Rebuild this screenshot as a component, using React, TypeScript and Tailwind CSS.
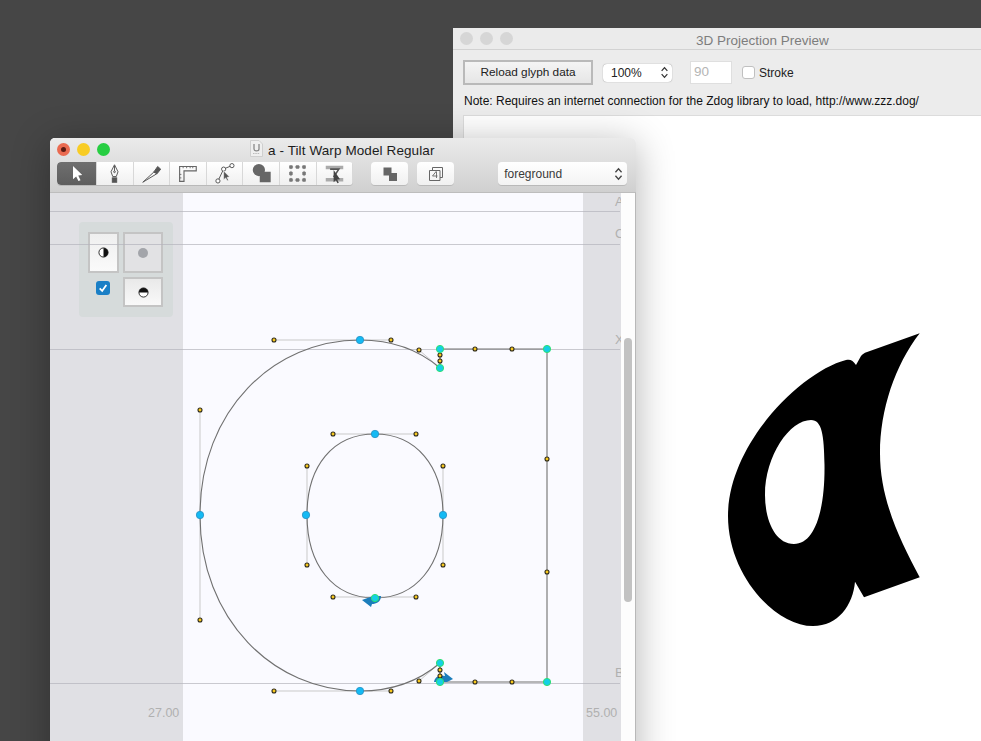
import React from 'react'

const font = { fontFamily: '"Liberation Sans", Arial, sans-serif' }

const Light = ({ color, dot }: { color: string; dot?: boolean }) => (
  <span className="flex h-[13px] w-[13px] items-center justify-center rounded-full" style={{ background: color }}>
    {dot && <span className="h-[5px] w-[5px] rounded-full bg-[#5a1a12]" />}
  </span>
)

const UpDown = ({ className }: { className?: string }) => (
  <svg viewBox="0 0 10 16" className={className} fill="none" stroke="currentColor" strokeWidth="1.5">
    <path d="M1.5 6 5 2l3.5 4M1.5 10 5 14l3.5-4" />
  </svg>
)

// toolbar icons, all drawn on a 24x24 box
const tools: React.ReactNode[] = [
  <path key="arrow" d="M8 3.500v15l3.600-3.200 2.600 5.400 2.400-1.100-2.600-5.300 4.600-.5z" fill="#fff" />,
  <g key="pen" fill="none" stroke="#555" strokeWidth="1.100">
    <path d="M12 2 8 10l2 5.500h4l2-5.500z" />
    <path d="M12 3v6" />
    <circle cx="12" cy="10" r="1" />
    <rect x="9.500" y="17" width="5" height="5" fill="#555" />
  </g>,
  <g key="knife" stroke="#555" strokeWidth="1.100">
    <path d="M2 22 14.500 10.500l4 1.500z" fill="none" />
    <path d="M14.500 10.500 19 4l3.500 3-4 5z" fill="#555" />
  </g>,
  <g key="ruler" fill="none" stroke="#666" strokeWidth="1.300">
    <path d="M3 4h19v5H8v12H3z" />
    <path d="M7 4v2M11 4v2M15 4v2M18 4v2M3 13h2M3 17h2" strokeWidth="1" />
  </g>,
  <g key="nodes" fill="none" stroke="#555" strokeWidth="1.100">
    <circle cx="4.500" cy="20.500" r="2.400" fill="#fff" />
    <circle cx="11" cy="7" r="2.400" fill="#fff" />
    <circle cx="20.500" cy="3" r="2.400" fill="#fff" />
    <path d="M5.500 18.500 10 9M13 6l5.500-2.200" />
    <path d="M11 9v10l2.400-2 1.600 3.400 1.500-.7-1.600-3.300 3-.4z" fill="#555" stroke="#fff" strokeWidth=".6" />
  </g>,
  <g key="shapes" fill="#666">
    <circle cx="9" cy="8" r="7" />
    <rect x="10" y="10" width="12.500" height="12" />
  </g>,
  <g key="transform" fill="#777">
    <path d="M5 4.500h14M5 19.500h14M4.500 5v14M19.500 5v14" stroke="#888" strokeDasharray="2 2" />
    {[[4.5, 4.5], [12, 4.5], [19.5, 4.5], [4.5, 12], [19.5, 12], [4.5, 19.5], [12, 19.5], [19.5, 19.5]].map(([x, y]) => (
      <rect key={`${x}-${y}`} x={x - 2} y={y - 2} width="4" height="4" rx=".8" />
    ))}
  </g>,
  <g key="metrics">
    <path d="M2 3h20v4H2zM2 17h20v4H2z" fill="#aaa" />
    <path d="M7 7h10l-6 9" fill="none" stroke="#555" strokeWidth="1.800" />
    <path d="M11 8v14l2.600-2.400 1.800 3.600 1.500-.7-1.800-3.600 3.200-.4z" fill="#444" />
  </g>
]

const ToolButton = ({ children, active, first }: { children: React.ReactNode; active?: boolean; first?: boolean }) => (
  <div
    className={`flex h-[23px] items-center justify-center border-r border-[#d8d8d8] ${
      active ? 'rounded-l-[4px] bg-gradient-to-b from-[#6f6f6f] to-[#5e5e5e]' : 'bg-gradient-to-b from-white to-[#f0f0f0]'
    } ${first ? 'w-[40px]' : 'w-[36.6px]'}`}
  >
    <svg viewBox="0 0 24 24" className="h-[21px] w-[21px]">
      {children}
    </svg>
  </div>
)

const Dot = ({ x, y }: { x: number; y: number }) => (
  <circle cx={x} cy={y} r="2" fill="#f8c81c" stroke="#2e2a1a" strokeWidth="1.100" />
)

const SmoothNode = ({ x, y }: { x: number; y: number }) => (
  <circle cx={x} cy={y} r="3.700" fill="#14baf4" stroke="#2a8fc0" strokeWidth=".8" />
)

const CornerNode = ({ x, y }: { x: number; y: number }) => (
  <circle cx={x} cy={y} r="3.600" fill="#14cfe6" stroke="#2fe070" strokeWidth="1" />
)

const handles = [
  [274, 340, 360, 340], [360, 340, 391, 340], [419, 350, 440, 368], [440, 349, 440, 368],
  [274, 691, 360, 691], [360, 691, 391, 691], [419, 681, 440, 663], [440, 663, 440, 682],
  [200, 410, 200, 620], [333, 434, 416, 434], [333, 597, 416, 597], [307, 466, 307, 565], [443, 466, 443, 565]
]

const dots = [
  [274, 340], [391, 340], [419, 350], [440, 361], [440, 355], [475, 349], [512, 349],
  [547, 459], [547, 572], [512, 682], [475, 682], [440, 670], [440, 676], [419, 681], [391, 691], [274, 691],
  [200, 620], [200, 410], [333, 434], [416, 434], [443, 466], [443, 565], [416, 597], [333, 597], [307, 565], [307, 466]
]

const Outline = () => (
  <svg viewBox="50 193 571 585" className="absolute inset-0 h-full w-full">
    {[211, 244, 349, 683].map((y) => (
      <line key={y} x1="50" y1={y + 0.5} x2="620" y2={y + 0.5} stroke="#b4b4bc" strokeOpacity=".7" />
    ))}
    {handles.map(([a, b, c, d]) => (
      <line key={`${a}-${b}-${c}-${d}`} x1={a} y1={b} x2={c} y2={d} stroke="#c9c9c9" />
    ))}
    <path
      d="M360 340C391 340 419 350 440 368V349H547V682H440V663C419 681 391 691 360 691C274 691 200 620 200 515C200 410 274 340 360 340Z"
      fill="none"
      stroke="#707070"
      strokeWidth="1.100"
    />
    <path d="M375 434C416 434 443 466 443 515C443 565 416 598 375 598C333 598 307 565 307 515C307 466 333 434 375 434Z" fill="none" stroke="#707070" strokeWidth="1.100" />
    <path d="M362 600 373 596H381C381 602 376 604 372 604L371 607Z" fill="#1b7dbb" />
    <path d="M434 682C435 677 438 675 445 676L444 672 453 679 447 682Z" fill="#1b7dbb" />
    {dots.map(([x, y]) => (
      <Dot key={`${x}-${y}`} x={x} y={y} />
    ))}
    <SmoothNode x={360} y={340} />
    <SmoothNode x={200} y={515} />
    <SmoothNode x={360} y={691} />
    <SmoothNode x={375} y={434} />
    <SmoothNode x={443} y={515} />
    <SmoothNode x={306} y={515} />
    <CornerNode x={375} y={598} />
    <CornerNode x={440} y={349} />
    <CornerNode x={440} y={368} />
    <CornerNode x={547} y={349} />
    <CornerNode x={547} y={682} />
    <CornerNode x={440} y={682} />
    <CornerNode x={440} y={663} />
  </svg>
)

const MasterButton = ({ className, children }: { className: string; children: React.ReactNode }) => (
  <div className={`flex items-center justify-center border-2 border-[#c4c4c4] ${className}`}>{children}</div>
)

const PreviewWindow = () => (
  <div className="absolute left-[453px] top-[28px] flex h-[760px] w-[600px] flex-col rounded-t-[5px] bg-[#ececec]">
    <div className="relative flex h-[22px] items-center border-b border-[#d2d2d2] bg-[#ebebeb]">
      <div className="ml-[7px] flex gap-[7px]">
        <Light color="#d6d6d6" />
        <Light color="#d6d6d6" />
        <Light color="#d6d6d6" />
      </div>
      <span className="absolute left-[243px] top-[3px] text-[13.5px] text-[#7d7d7d]">3D Projection Preview</span>
    </div>
    <div className="flex h-[44px] items-center pl-[10px] pt-[1px] text-[#222]">
      <div className="flex h-[25px] w-[130px] items-center justify-center border-2 border-[#b9b9b9] bg-gradient-to-b from-[#f4f4f4] to-[#e6e6e6] text-[11.8px]">
        Reload glyph data
      </div>
      <div className="ml-[10px] flex h-[18px] w-[69px] items-center justify-between rounded-[4px] bg-white pl-[8px] pr-[3px] text-[12px] shadow-[0_0_1px_rgba(0,0,0,0.5)]">
        100%
        <UpDown className="h-[13px] w-[9px] text-[#333]" />
      </div>
      <div className="ml-[18px] flex h-[23px] w-[42px] items-center border border-[#dfdfdf] bg-white pl-[3px] text-[13.5px] text-[#b5b5b5]">90</div>
      <div className="ml-[10px] h-[13px] w-[13px] rounded-[3px] border border-[#c0c0c0] bg-white" />
      <span className="ml-[4px] text-[12px]">Stroke</span>
    </div>
    <div className="h-[21px] pl-[11px] text-[12px] leading-[15px] text-[#111]">
      Note: Requires an internet connection for the Zdog library to load, http://www.zzz.dog/
    </div>
    <div className="ml-[10px] flex-1 border-t border-l border-[#dcdcdc] bg-white" />
  </div>
)

const GlyphWindow = () => (
  <div className="absolute left-[50px] top-[138px] flex h-[640px] w-[586px] flex-col rounded-t-[5px] bg-[#fafaff] shadow-[0_6px_38px_rgba(0,0,0,0.3)]">
    <div className="rounded-t-[5px] bg-gradient-to-b from-[#ebebeb] to-[#cfcfcf]">
      <div className="relative flex h-[22px] items-center pl-[7px]">
        <div className="flex gap-[7px]">
          <Light color="#ea6a50" dot />
          <Light color="#f8cc24" />
          <Light color="#27ce42" />
        </div>
        <svg viewBox="0 0 13 17" className="absolute left-[200px] top-[2px] h-[17px] w-[13px]">
          <path d="M.5.5h8.500l3.500 3.500v12.500H.5z" fill="#efefef" stroke="#cfcfcf" />
          <path d="M4 4v5c0 2.500 5 2.500 5 0V4" fill="none" stroke="#888" strokeWidth="1.300" />
          <path d="M3 13.500h7" stroke="#bbb" strokeDasharray="1.500 .8" />
        </svg>
        <span className="absolute left-[218px] top-[3px] text-[13.5px] tracking-[0.1px] text-[#1c1c1c]">a - Tilt Warp Model Regular</span>
      </div>
      <div className="flex h-[32px] items-start pl-[7px] pt-[2px]">
        <div className="flex overflow-hidden rounded-[4px] shadow-[0_1px_0_rgba(0,0,0,0.12)]">
          {tools.map((icon, i) => (
            <ToolButton key={i} active={i === 0} first={i === 0}>
              {icon}
            </ToolButton>
          ))}
        </div>
        <div className="ml-[18px] flex h-[23px] w-[37px] items-center justify-center rounded-[4px] bg-gradient-to-b from-white to-[#f0f0f0] shadow-[0_1px_0_rgba(0,0,0,0.12)]">
          <svg viewBox="0 0 14 14" className="h-[14px] w-[14px]" fill="#666">
            <rect x="0.500" y="0.500" width="8" height="8" />
            <rect x="6" y="6" width="8" height="8" />
          </svg>
        </div>
        <div className="ml-[9px] flex h-[23px] w-[37px] items-center justify-center rounded-[4px] bg-gradient-to-b from-white to-[#f0f0f0] shadow-[0_1px_0_rgba(0,0,0,0.12)]">
          <svg viewBox="0 0 14 14" className="h-[14px] w-[14px]" fill="none" stroke="#666">
            <path d="M.5 3.500h10.500v10H.5z" />
            <path d="M3.500 3V.5h10v10H11" />
            <path d="M7.500 4 3.500 9h5M7.500 5v6" strokeWidth=".9" />
          </svg>
        </div>
        <div className="ml-[44px] flex h-[23px] w-[129px] items-center justify-between rounded-[4px] bg-gradient-to-b from-white to-[#f3f3f3] pl-[6px] pr-[4px] text-[12px] text-[#3a3a3a] shadow-[0_1px_0_rgba(0,0,0,0.12)]">
          foreground
          <UpDown className="h-[14px] w-[9px] text-[#444]" />
        </div>
      </div>
      <div className="h-px bg-[#bdbdbd]" />
    </div>

    <div className="relative flex flex-1 overflow-hidden">
      <div className="w-[133px] bg-[#e0e0e4]" />
      <div className="flex-1 bg-[#fafaff]" />
      <div className="w-[38px] bg-[#e0e0e4]" />
      <div className="relative w-[15px] border-r border-[#b8b8b8] bg-[#fdfdfd]">
        <div className="absolute left-[3px] top-[145px] h-[264px] w-[8px] rounded-full bg-[#c2c2c2]" />
      </div>

      <div className="absolute inset-0 right-[15px] overflow-hidden">
        <span className="absolute left-[565px] top-[-1px] text-[13px] text-[#b0b0b0]">A</span>
        <span className="absolute left-[565px] top-[31px] text-[13px] text-[#b0b0b0]">C</span>
        <span className="absolute left-[565px] top-[137px] text-[13px] text-[#b0b0b0]">X</span>
        <span className="absolute left-[565px] top-[470px] text-[13px] text-[#b0b0b0]">B</span>
        <span className="absolute left-[98px] top-[511px] text-[12.5px] text-[#b0b0b0]">27.00</span>
        <span className="absolute left-[536px] top-[511px] text-[12.5px] text-[#b0b0b0]">55.00</span>

        {/* master compatibility panel, the guide lines run over it */}
        <div className="absolute left-[29px] top-[29px] h-[95px] w-[94px] rounded-[4px] bg-[#d6dbdb] px-[9px] pt-[10px]">
          <div className="flex gap-[4px]">
            <MasterButton className="h-[41px] w-[31px] bg-gradient-to-b from-[#efefef] to-[#fafafa]">
              <svg viewBox="0 0 12 12" className="h-[11px] w-[11px]">
                <circle cx="6" cy="6" r="5" fill="#fff" stroke="#222" />
                <path d="M6 1a5 5 0 0 1 0 10z" fill="#111" />
              </svg>
            </MasterButton>
            <MasterButton className="h-[41px] w-[40px] bg-[#e2e2e4]">
              <span className="h-[10px] w-[10px] rounded-full bg-[#a3a5aa]" />
            </MasterButton>
          </div>
          <div className="mt-[4px] flex gap-[13px] pl-[8px]">
            <div className="mt-[4px] flex h-[14px] w-[14px] items-center justify-center rounded-[3px] bg-[#1a7fc6]">
              <svg viewBox="0 0 12 12" className="h-[10px] w-[10px]" fill="none" stroke="#fff" strokeWidth="2.200">
                <path d="M2 6.500 5 9.500 10 2.500" />
              </svg>
            </div>
            <MasterButton className="h-[30px] w-[40px] bg-gradient-to-b from-[#e9e9e9] to-[#f9f9f9]">
              <svg viewBox="0 0 12 12" className="h-[11px] w-[11px]">
                <circle cx="6" cy="6" r="5" fill="#fff" stroke="#222" />
                <path d="M1 6a5 5 0 0 1 10 0z" fill="#111" />
              </svg>
            </MasterButton>
          </div>
        </div>

        <Outline />
      </div>
    </div>
  </div>
)

const App = () => {
  return (
    <div className="relative h-[741px] w-[981px] overflow-hidden bg-[#464646]" style={font}>
      <PreviewWindow />
      {/* rendered glyph in the preview */}
      <svg viewBox="0 0 981 741" className="absolute inset-0 h-[741px] w-[981px]">
        <path
          fillRule="evenodd"
          d="M919.700 333.300 865 352.700Q862.500 354 861 356L856 365C853 360 850 359 846 360C800 372 728 445 728 516C728 575 775 626 813 626C838 626 853 605 855 581.700L864 597.300 919.700 577.300C900 540 880 500 880 453C880 410 895 365 919.700 333.300ZM811 420C822 420 824 435 824.500 465C825 510 815 544 794 544C775 544 765 520 765 495C765 455 790 420 811 420Z"
          fill="#000"
        />
      </svg>
      <GlyphWindow />
    </div>
  )
}

export default App
